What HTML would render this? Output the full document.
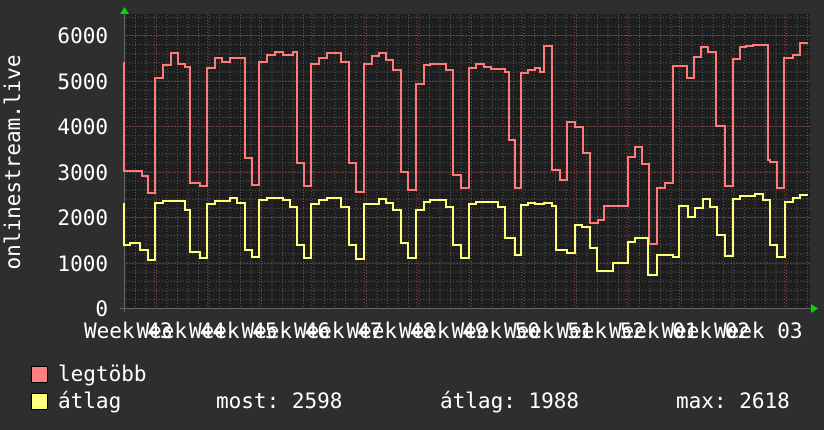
<!DOCTYPE html>
<html><head><meta charset="utf-8"><style>
html,body{margin:0;padding:0;background:#2e2e2e;}
svg{display:block;}
text{font-family:"DejaVu Sans Mono","Liberation Mono",monospace;fill:#fff;font-size:21px;}
</style></head><body>
<svg width="824" height="430" viewBox="0 0 824 430" xmlns="http://www.w3.org/2000/svg">
<rect width="824" height="430" fill="#2e2e2e"/>
<rect x="124" y="14" width="686" height="294" fill="#1e1e1e"/>
<defs>
<pattern id="mh" x="0" y="308" width="686" height="9.1" patternUnits="userSpaceOnUse">
<line x1="0" y1="0.5" x2="686" y2="0.5" stroke="#5a5a5a" stroke-width="1" stroke-dasharray="1,2"/>
</pattern>
<pattern id="mv" x="124.5" y="0" width="10.5" height="294" patternUnits="userSpaceOnUse">
<line x1="0.5" y1="0" x2="0.5" y2="294" stroke="#5a5a5a" stroke-width="1" stroke-dasharray="1,2"/>
</pattern>
</defs>
<rect x="124" y="14" width="686" height="294" fill="url(#mh)"/>
<rect x="124" y="14" width="686" height="294" fill="url(#mv)"/>
<g stroke="#8a3a3a" stroke-width="1" stroke-dasharray="1,2">
<line x1="124" y1="35.5" x2="810" y2="35.5"/>
<line x1="124" y1="81.5" x2="810" y2="81.5"/>
<line x1="124" y1="126.5" x2="810" y2="126.5"/>
<line x1="124" y1="172.5" x2="810" y2="172.5"/>
<line x1="124" y1="217.5" x2="810" y2="217.5"/>
<line x1="124" y1="263.5" x2="810" y2="263.5"/>
<line x1="154.5" y1="14" x2="154.5" y2="308"/>
<line x1="207.5" y1="14" x2="207.5" y2="308"/>
<line x1="259.5" y1="14" x2="259.5" y2="308"/>
<line x1="311.5" y1="14" x2="311.5" y2="308"/>
<line x1="364.5" y1="14" x2="364.5" y2="308"/>
<line x1="416.5" y1="14" x2="416.5" y2="308"/>
<line x1="469.5" y1="14" x2="469.5" y2="308"/>
<line x1="521.5" y1="14" x2="521.5" y2="308"/>
<line x1="574.5" y1="14" x2="574.5" y2="308"/>
<line x1="626.5" y1="14" x2="626.5" y2="308"/>
<line x1="679.5" y1="14" x2="679.5" y2="308"/>
<line x1="731.5" y1="14" x2="731.5" y2="308"/>
<line x1="784.5" y1="14" x2="784.5" y2="308"/>
</g>
<line x1="120" y1="308.5" x2="812" y2="308.5" stroke="#666" stroke-width="1"/>
<line x1="124.5" y1="12" x2="124.5" y2="312" stroke="#666" stroke-width="1"/>
<polygon points="120,14 124.5,7 129,14" fill="#00dd00"/>
<polygon points="811,304 818,308.5 811,313" fill="#00dd00"/>
<path fill="none" stroke="#ff7a7a" stroke-width="2" d="M124,62 V171 H142 V176 H148 V193 H155 V78 H163 V65 H171 V53 H178 V64 H185 V67 H190 V183 H200 V186 H207 V68 H215 V58 H222 V62 H230 V58 H245 V158 H252 V185 H259 V62 H267 V55 H275 V52 H283 V55 H293 V52 H297 V163 H304 V186 H311 V64 H319 V58 H327 V53 H341 V62 H349 V163 H356 V192 H364 V64 H372 V56 H379 V53 H386 V60 H393 V70 H401 V172 H408 V190 H416 V84 H424 V65 H430 V64 H446 V70 H453 V175 H461 V188 H469 V68 H476 V64 H484 V67 H491 V69 H505 V72 H509 V140 H515 V188 H521 V73 H528 V70 H535 V68 H540 V72 H544 V46 H552 V170 H560 V180 H567 V122 H575 V127 H583 V153 H590 V223 H598 V220 H604 V206 H613 V206 H628 V157 H635 V147 H642 V164 H649 V244 H657 V188 H665 V183 H673 V66 H679 V66 H687 V78 H694 V57 H701 V47 H708 V52 H716 V126 H718 V126 H725 V186 H733 V59 H740 V47 H746 V46 H753 V45 H768 V160 H770 V162 H777 V188 H784 V58 H793 V55 H800 V43 H808"/>
<path fill="none" stroke="#ffff7a" stroke-width="2" d="M124,203 V245 H130 V243 H140 V250 H148 V260 H155 V203 H163 V201 H185 V210 H190 V252 H200 V258 H207 V204 H215 V201 H230 V198 H237 V203 H245 V250 H252 V257 H259 V200 H267 V198 H283 V200 H290 V207 H297 V245 H304 V258 H311 V204 H319 V200 H327 V198 H341 V207 H349 V245 H356 V259 H364 V204 H379 V199 H386 V203 H393 V210 H401 V243 H408 V258 H416 V210 H424 V202 H430 V200 H446 V207 H453 V245 H461 V258 H469 V204 H476 V202 H498 V207 H505 V238 H515 V255 H521 V205 H528 V203 H535 V204 H544 V203 H552 V206 H556 V250 H567 V253 H575 V225 H582 V227 H590 V248 H597 V271 H613 V263 H628 V242 H635 V238 H648 V275 H657 V255 H673 V257 H679 V206 H688 V217 H695 V208 H703 V199 H710 V207 H717 V235 H725 V256 H733 V199 H740 V196 H755 V194 H763 V200 H770 V245 H777 V257 H785 V202 H793 V198 H800 V195 H808"/>
<g text-anchor="end">
<text x="108" y="43">6000</text>
<text x="108" y="89">5000</text>
<text x="108" y="134">4000</text>
<text x="108" y="180">3000</text>
<text x="108" y="225">2000</text>
<text x="108" y="271">1000</text>
<text x="108" y="316">0</text>
</g>
<text transform="translate(20,162) rotate(-90)" text-anchor="middle">onlinestream.live</text>
<g>
<text x="84" y="338">Week 43</text>
<text x="136.5" y="338">Week 44</text>
<text x="189" y="338">Week 45</text>
<text x="241.5" y="338">Week 46</text>
<text x="294" y="338">Week 47</text>
<text x="346.5" y="338">Week 48</text>
<text x="399" y="338">Week 49</text>
<text x="451.5" y="338">Week 50</text>
<text x="504" y="338">Week 51</text>
<text x="556.5" y="338">Week 52</text>
<text x="609" y="338">Week 01</text>
<text x="661.5" y="338">Week 02</text>
<text x="714" y="338">Week 03</text>
</g>
<rect x="31.5" y="366.5" width="16" height="16" fill="#ff8080" stroke="#000"/>
<rect x="31.5" y="393.5" width="16" height="16" fill="#ffff80" stroke="#000"/>
<text x="58" y="381">legtöbb</text>
<text x="58" y="408">átlag</text>
<text x="216" y="408">most: 2598</text>
<text x="440" y="408">átlag: 1988</text>
<text x="676" y="408">max: 2618</text>
</svg>
</body></html>
